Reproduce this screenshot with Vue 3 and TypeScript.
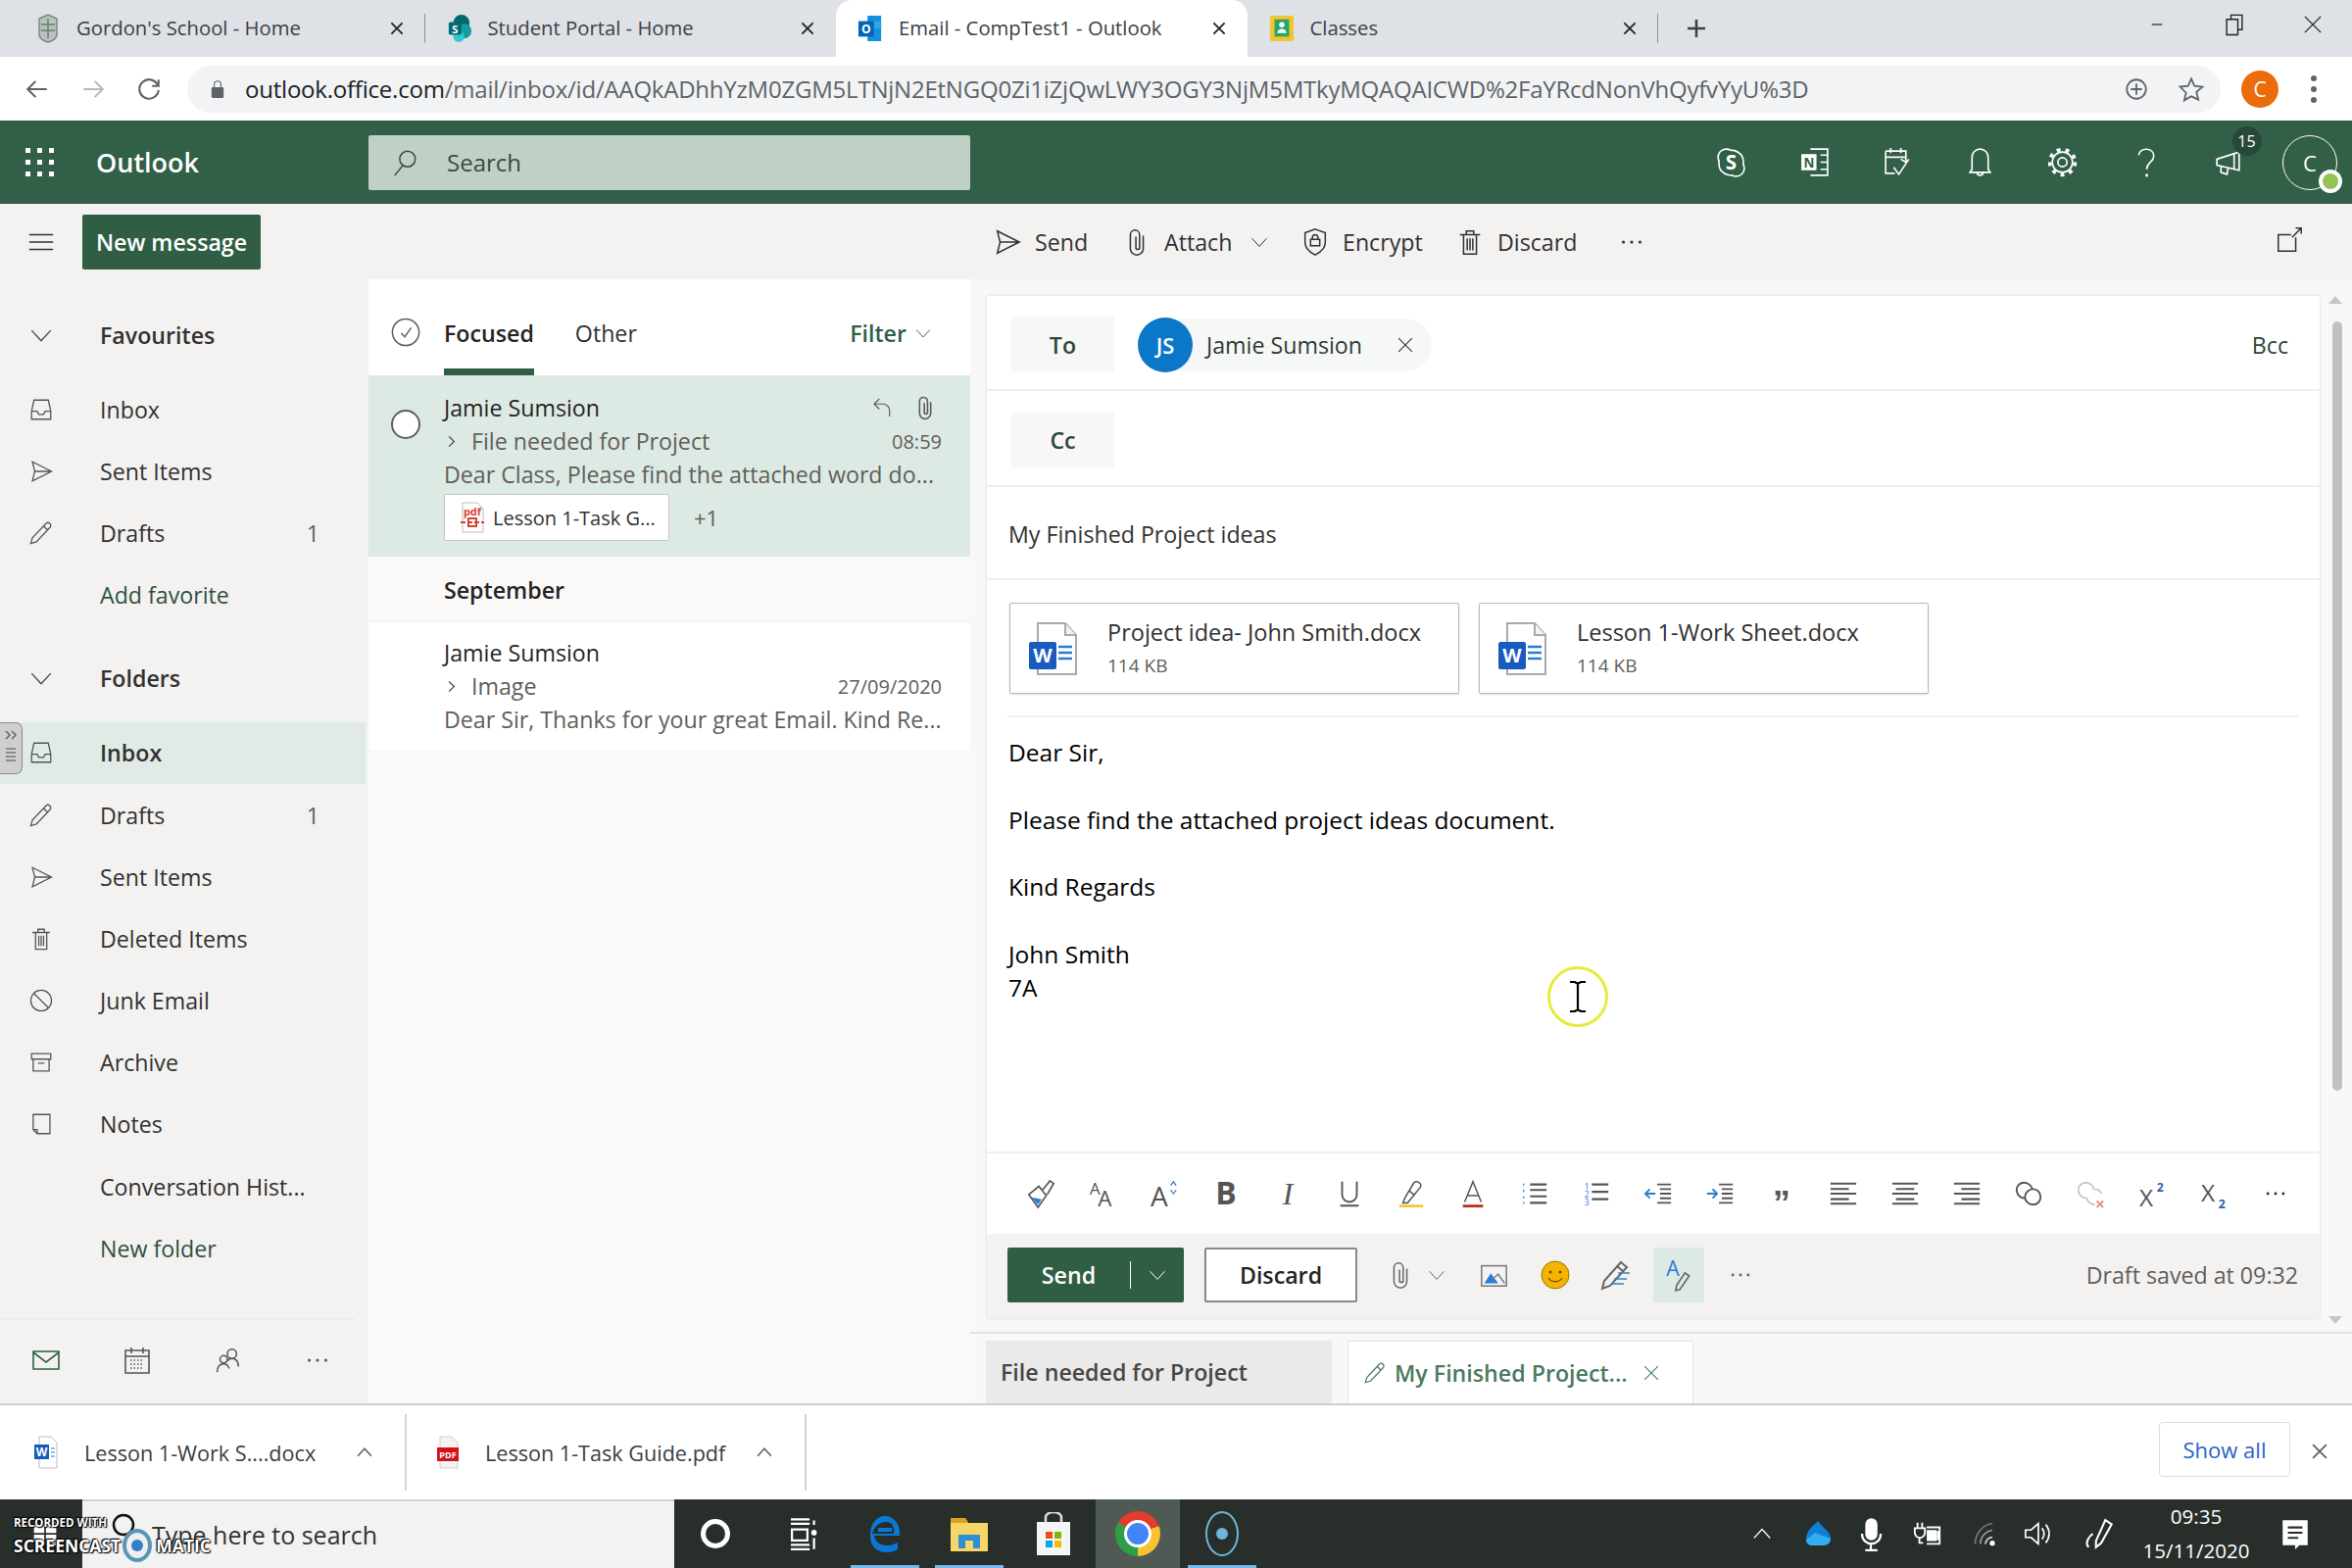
<script setup lang="ts">
import { h } from 'vue'

const dots3 = '<circle cx="7" cy="16" r="1.7" fill="currentColor" stroke="none"/><circle cx="16" cy="16" r="1.7" fill="currentColor" stroke="none"/><circle cx="25" cy="16" r="1.7" fill="currentColor" stroke="none"/>'
const p = (d: string, extra = '') => `<path d="${d}" ${extra}/>`
const icons: Record<string, string> = {
  inbox: p('M7 4h18l3 14v10H4V18z M4 18h7l2 4h6l2-4h7'),
  send: p('M5 4l24 12L5 28l3-12z M8 16h21'),
  pencil: p('M22 4a3.5 3.5 0 0 1 5 5L10 27l-7 2 2-7z M19 7l5 5'),
  trash: p('M9 8v21h14V8 M5 8h22 M12 8V4h8v4 M13 12v13M16 12v13M19 12v13'),
  junk: '<circle cx="16" cy="16" r="13"/>' + p('M7 7l18 18'),
  archive: p('M4 5h24v7H4z M6 12v15h20V12 M12 17h8'),
  note: p('M6 4h21v24H11l-5-5z M6 23h5v5'),
  chevd: p('M4 10l12 13 12-13'),
  chevu: p('M5 22L16 10l11 12'),
  chevr: p('M11 5l11 11-11 11'),
  clip: p('M23 9v14a7 7 0 0 1-14 0V8a5 5 0 0 1 10 0v14a2 2 0 0 1-4 0V10'),
  shield: p('M16 2l11 4v10c0 7-5 11-11 14C10 27 5 23 5 16V6z M11 13h10v7H11z M13 13v-2a3 3 0 0 1 6 0v2'),
  popout: p('M23 13v15H4V10h14 M19 13l10-10 M23 3h6v6'),
  hamb: p('M3 8h26M3 16h26M3 24h26'),
  reply: p('M11 4L4 11l7 7 M4 11h12a9 9 0 0 1 9 9v8'),
  check: '<circle cx="16" cy="16" r="14.5"/>' + p('M11 17l4 4 7-10'),
  x: p('M6 6l20 20M26 6L6 26'),
  search: '<circle cx="19" cy="12" r="8.5"/>' + p('M14 19L5 30'),
  mail: p('M3 7h26v18H3z M3 8l13 10L29 8'),
  cal: p('M4 6h24v23H4z M4 12h24 M10 3v6M22 3v6') + '<path d="M9 16h14M9 20h14M9 24h14" stroke-dasharray="1.5 2"/>',
  people: '<circle cx="21" cy="9" r="5"/><circle cx="12" cy="15" r="4"/>' + p('M5 29c0-6 3-9 7-9s5 2 6 5 M16 17c1-2 3-3 5-3 5 0 7 4 7 9'),
  dots: dots3,
  back: p('M28 16H5 M14 6L4 16l10 10'),
  fwd: p('M4 16h23 M18 6l10 10-10 10'),
  reload: p('M27 11A12 12 0 1 0 28 17 M28 4v8h-8'),
  star: p('M16 3l4 9 10 1-7.500 6.500 2.300 9.500L16 25l-8.800 5 2.300-9.500L2 13l10-1z'),
  plusc: '<circle cx="16" cy="16" r="12"/>' + p('M16 9v14M9 16h14'),
  skype: '<path d="M11 3a8 8 0 0 0-8 8c0 2 .5 3 1 4-.5 5 1 9 4 11 3 2.500 6 3 9 3 2 1 3 1 4 1a8 8 0 0 0 8-8c0-1.500-.5-3-1-4 .5-5-1-9-4-11-3-2.500-6-3-9-3-1-1-3-1-4-1z"/><text x="16" y="23" text-anchor="middle" font-size="20" font-weight="700" fill="currentColor" stroke="none" font-family="Open Sans">S</text>',
  onenote: p('M12 3h17v26H12') + '<rect x="3" y="8" width="15" height="16" fill="currentColor" stroke="none"/><text x="10.500" y="21" text-anchor="middle" font-size="13" font-weight="700" fill="#325f47" stroke="none" font-family="Open Sans">N</text>' + p('M22 9h7M22 16h7M22 23h7'),
  todo: p('M5 5h20v11 M5 5v22h9 M5 11h20 M10 2v5M20 2v5 M13 21l5 7 10-15 M20 13l5 3'),
  bell: p('M16 3a8 8 0 0 0-8 8v12l-2 3h20l-2-3V11a8 8 0 0 0-8-8z M13 26a3 3 0 0 0 6 0'),
  gear: '<circle cx="16" cy="16" r="4.500"/><circle cx="16" cy="16" r="10"/><circle cx="16" cy="16" r="12.500" stroke-width="3.500" stroke-dasharray="3.800 5"/>',
  help: p('M9 9c1-8 15-8 15 1 0 6-7 6-7 13') + '<circle cx="17" cy="29" r="1.500" fill="currentColor" stroke="none"/>',
  mega: p('M5 13l22-7v18L5 19z M5 13v6 M9 20v6l6 2 1-6 M22 7v16'),
  minimize: p('M9 16h14'),
  restore: p('M12 9V5h13v17h-5 M7 10h13v18H7z'),
  plus: p('M16 4v24M4 16h24'),
  lock: '<rect x="7" y="13" width="18" height="16" rx="2" fill="currentColor" stroke="none"/>' + p('M11 13V9a5 5 0 0 1 10 0v4'),
  brush: '<path d="M3 17l11-9 8 10-9 13z" fill="#fff" stroke="#555" stroke-width="1.800"/><path d="M6 20l11 2-4 6z" fill="#2b7cd3" stroke="none"/><path d="M18 12l8-10 4 3-7 12" fill="#fff" stroke="#555" stroke-width="1.800"/>',
  aa: '<text x="2" y="17" font-size="18" fill="currentColor" stroke="none" font-family="Open Sans">A</text><text x="11" y="30" font-size="24" fill="currentColor" stroke="none" font-family="Open Sans">A</text>',
  asize: '<text x="1" y="30" font-size="30" fill="currentColor" stroke="none" font-family="Open Sans">A</text><path d="M23 7l3-4 3 4M23 12l3 4 3-4" stroke="#2b7cd3" stroke-width="1.300"/>',
  bold: '<text x="16" y="28" text-anchor="middle" font-size="34" font-weight="700" fill="currentColor" stroke="none" font-family="Open Sans">B</text>',
  italic: '<text x="16" y="28" text-anchor="middle" font-size="34" font-style="italic" fill="currentColor" stroke="none" font-family="Liberation Serif">I</text>',
  under: p('M8 3v14a8 8 0 0 0 16 0V3 M6 29h20', 'stroke-width="2"'),
  hi: p('M9 21l-2 5h5l14-17c2-4-4-8-7-5z M14 13l6 5') + '<rect x="3" y="28" width="26" height="3" fill="#f3c83b" stroke="none"/>',
  color: p('M7 25L16 3l9 22 M10 18h12') + '<rect x="5" y="28" width="22" height="3" fill="#b92f22" stroke="none"/>',
  bul: p('M11 6h18M11 12h18M11 19h18M11 26h18', 'stroke-width="2.200"') + '<path d="M4 5v2M4 12v2M4 19v2M4 25v2" stroke="#2b7cd3" stroke-width="1.500"/>',
  num: p('M11 6h18M11 14h18M11 22h18', 'stroke-width="2.200"') + '<text x="3" y="12" font-size="9" fill="#2b7cd3" stroke="none">1</text><text x="3" y="20" font-size="9" fill="#2b7cd3" stroke="none">2</text><text x="3" y="29" font-size="9" fill="#2b7cd3" stroke="none">3</text>',
  out: p('M15 6h15M18 11h12M18 16h12M18 21h12M15 26h15', 'stroke-width="2"') + '<path d="M2 16h11M7 11l-5 5 5 5" stroke="#2b7cd3" stroke-width="2"/>',
  ind: p('M15 6h15M18 11h12M18 16h12M18 21h12M15 26h15', 'stroke-width="2"') + '<path d="M2 16h11M8 11l5 5-5 5" stroke="#2b7cd3" stroke-width="2"/>',
  quote: '<text x="16" y="38" text-anchor="middle" font-size="38" font-weight="700" fill="currentColor" stroke="none" font-family="Liberation Sans">”</text>',
  al: p('M2 5h28M2 11h20M2 16h28M2 22h20M2 27h28', 'stroke-width="2.200"'),
  ac: p('M2 5h28M6 11h20M2 16h28M6 22h20M2 27h28', 'stroke-width="2.200"'),
  ar: p('M2 5h28M10 11h20M2 16h28M10 22h20M2 27h28', 'stroke-width="2.200"'),
  link: p('M3 12c0-5 4-8 8-8 5 0 9 4 9 8 M12 21c-5 0-9-4-9-9 M29 20c0 5-4 8-8 8-5 0-9-4-9-8 0-5 4-9 9-9 5 0 8 4 8 9', 'stroke-width="2"'),
  unlink: p('M3 12c0-5 4-8 8-8 5 0 9 4 9 8 M12 21c-5 0-9-4-9-9 M12 20c0 4 4 8 9 8 M21 11c3 0 6 2 7 5', 'stroke="#c8c8c8" stroke-width="2"') + '<path d="M23 24l7 7M30 24l-7 7" stroke="#e68a80" stroke-width="2"/>',
  sup: '<text x="2" y="30" font-size="26" fill="currentColor" stroke="none" font-family="Open Sans">X</text><text x="21" y="14" font-size="13" font-weight="700" fill="#2a5db0" stroke="none" font-family="Open Sans">2</text>',
  sub: '<text x="2" y="25" font-size="26" fill="currentColor" stroke="none" font-family="Open Sans">X</text><text x="21" y="32" font-size="13" font-weight="700" fill="#2a5db0" stroke="none" font-family="Open Sans">2</text>',
  image: '<rect x="3" y="6" width="27" height="22" fill="#f3f3f3" stroke="#777"/><path d="M6 25l7-11 8 11z" fill="#2b7cd3" stroke="none"/><path d="M17 19l4-4 7 10" stroke="#777"/>',
  smile: '<circle cx="16" cy="16" r="14" fill="#f5b400" stroke="#9a7400" stroke-width="1"/><circle cx="11" cy="13" r="1.500" fill="#6b4e00" stroke="none"/><circle cx="21" cy="13" r="1.500" fill="#6b4e00" stroke="none"/><path d="M9 19c3 5 11 5 14 0" stroke="#6b4e00" stroke-width="1.400"/>',
  sign: p('M22 3l6 5L11 27l-8 3 2-8z M18 7l6 5', 'stroke-width="2"') + '<path d="M19 14h12M15 20h13M12 25h13" stroke="#2e86b8" stroke-width="1.500"/>',
  apen: '<text x="4" y="17" font-size="20" fill="#2b7cd3" stroke="none" font-family="Open Sans">A</text>' + p('M22 14l4 3-9 13-4 1 1-5z', 'stroke="#666" stroke-width="1.600"'),
  win: '<path d="M3 6l12-2v11H3zM17 4l12-2v13H17zM3 17h12v11L3 26zM17 17h12v13l-12-2z" fill="currentColor" stroke="none"/>',
  task: p('M8 3h17M8 7h17M9 12h14v10H9z M8 26h17M8 30h17 M29 4v4M29 20v10', 'stroke-width="2"') + '<circle cx="29" cy="15" r="2.500" fill="currentColor" stroke="none"/>',
  mic: '<rect x="11" y="2" width="11" height="20" rx="5.500" fill="currentColor" stroke="none"/>' + p('M8 16c0 12 17 12 17 0 M16 26v5M11 31h11', 'stroke-width="2"'),
  power: p('M5 4v6M10 4v6 M2 10h11v5a5.500 5.500 0 0 1-11 0z M7 20v6h4 M15 9h14v18H15 M27 13v10', 'stroke-width="2"') + '<rect x="15" y="12" width="11" height="12" fill="currentColor" stroke="none"/>',
  wifi: '<path d="M4 28C4 16 12 6 24 4" stroke="#777" stroke-width="2"/><path d="M10 28c0-8 6-15 14-16" stroke="#999" stroke-width="2"/><path d="M16 28c0-4 4-8 8-8" stroke="#ccc" stroke-width="2"/><circle cx="24" cy="27" r="3" fill="#fff" stroke="none"/>',
  vol: p('M3 12h6l8-7v22l-8-7H3z M21 10c3 4 3 8 0 12 M25 6c5 6 5 14 0 20', 'stroke-width="1.800"'),
  pen: p('M21 3l6 4-10 18-5 4v-6z M9 16c-4 3-8 9-4 13', 'stroke-width="2"'),
  notif: '<path d="M4 3h24v24H20l-4 4v-4H4z" fill="currentColor" stroke="none"/><path d="M9 10h14M9 15h14M9 20h10" stroke="#282e2a" stroke-width="2"/>',
}

const Ic = (props: { n: string; s?: number | string; w?: number | string }) =>
  h('svg', {
    class: 'ic',
    width: props.w || props.s || 32,
    height: props.s || 32,
    viewBox: '0 0 32 32',
    fill: 'none',
    stroke: 'currentColor',
    'stroke-width': 1.6,
    innerHTML: icons[props.n],
    preserveAspectRatio: 'xMidYMid meet',
  })
Ic.props = ['n', 's', 'w']

const tabs = [
  { t: "Gordon's School - Home", f: 'crest', active: false },
  { t: 'Student Portal - Home', f: 'sp', active: false },
  { t: 'Email - CompTest1 - Outlook', f: 'ol', active: true },
  { t: 'Classes', f: 'cl', active: false },
]
const headIcons = ['skype', 'onenote', 'todo', 'bell', 'gear', 'help', 'mega']
const favs = [
  { i: 'inbox', l: 'Inbox' },
  { i: 'send', l: 'Sent Items' },
  { i: 'pencil', l: 'Drafts', c: '1' },
  { i: '', l: 'Add favorite', green: true },
]
const folders = [
  { i: 'inbox', l: 'Inbox', on: true },
  { i: 'pencil', l: 'Drafts', c: '1' },
  { i: 'send', l: 'Sent Items' },
  { i: 'trash', l: 'Deleted Items' },
  { i: 'junk', l: 'Junk Email' },
  { i: 'archive', l: 'Archive' },
  { i: 'note', l: 'Notes' },
  { i: '', l: 'Conversation Hist...' },
  { i: '', l: 'New folder', green: true },
]
const fmt = ['brush', 'aa', 'asize', 'bold', 'italic', 'under', 'hi', 'color', 'bul', 'num', 'out', 'ind', 'quote', 'al', 'ac', 'ar', 'link', 'unlink', 'sup', 'sub', 'dots']
const sendTools = [
  { i: 'clip', w: 40, s: 30 },
  { i: 'chevd', w: 34, s: 20 },
  { i: 'image', w: 82, s: 30 },
  { i: 'smile', w: 44, s: 32 },
  { i: 'sign', w: 78, s: 32 },
  { i: 'apen', w: 52, s: 34, on: true },
  { i: 'dots', w: 74, s: 28 },
]
const attachments = [
  { n: 'Project idea- John Smith.docx', s: '114 KB' },
  { n: 'Lesson 1-Work Sheet.docx', s: '114 KB' },
]
const bodyLines = ['Dear Sir,', '', 'Please find the attached project ideas document.', '', 'Kind Regards', '', 'John Smith', '7A']
const tray = [
  { i: 'chevu', w: 56, s: 24 },
  { i: 'od', w: 58, s: 30 },
  { i: 'mic', w: 50, s: 36 },
  { i: 'power', w: 66, s: 30 },
  { i: 'wifi', w: 52, s: 28 },
  { i: 'vol', w: 54, s: 30 },
  { i: 'pen', w: 74, s: 34 },
]
const taskApps = ['edge', 'files', 'store', 'chrome', 'sc']
</script>

<template>
  <div class="app">
    <!-- browser tab strip -->
    <div class="tabstrip">
      <div v-for="t in tabs" :key="t.t" class="tab" :class="{ active: t.active }">
        <svg v-if="t.f === 'crest'" class="fav" viewBox="0 0 24 32" width="24" height="32">
          <path d="M3 6l9-4 9 4v16c0 5-5 7-9 8-4-1-9-3-9-8z" fill="#b6c2bc" stroke="#7c8a84" stroke-width="1.500" />
          <path d="M5 12h14M5 18h14M12 6v20" stroke="#6e7e76" stroke-width="1.500" />
        </svg>
        <svg v-else-if="t.f === 'sp'" class="fav" viewBox="0 0 28 32" width="28" height="32">
          <circle cx="16" cy="10" r="9" fill="#04686f" />
          <circle cx="19" cy="19" r="8" fill="#1a9ba1" />
          <circle cx="13" cy="25" r="6" fill="#37c6d0" />
          <rect x="2" y="9" width="14" height="14" rx="2" fill="#036c70" />
          <text x="9" y="21" text-anchor="middle" font-size="12" font-weight="700" fill="#fff" font-family="Open Sans">S</text>
        </svg>
        <svg v-else-if="t.f === 'ol'" class="fav" viewBox="0 0 28 32" width="28" height="32">
          <rect x="11" y="2" width="15" height="28" fill="#1490df" />
          <rect x="16" y="8" width="10" height="8" fill="#28a8ea" />
          <rect x="1" y="8" width="17" height="17" fill="#0364b8" />
          <text x="9.500" y="21" text-anchor="middle" font-size="13" font-weight="700" fill="#fff" font-family="Open Sans">O</text>
        </svg>
        <svg v-else class="fav" viewBox="0 0 28 30" width="28" height="30">
          <rect x="1" y="1" width="26" height="28" rx="2" fill="#f4c430" />
          <rect x="6" y="5" width="16" height="19" fill="#25a667" />
          <circle cx="14" cy="11" r="3" fill="#fff" />
          <path d="M9 20c0-6 10-6 10 0z" fill="#fff" />
        </svg>
        <span class="tabtitle">{{ t.t }}</span>
        <Ic n="x" s="18" class="tabx" />
      </div>
      <Ic n="plus" s="24" class="newtab" />
      <div class="winctl">
        <Ic n="minimize" s="24" />
        <Ic n="restore" s="28" />
        <Ic n="x" s="26" />
      </div>
    </div>

    <!-- browser toolbar -->
    <div class="toolbar">
      <Ic n="back" s="26" class="navb" />
      <Ic n="fwd" s="26" class="navb dim" />
      <Ic n="reload" s="26" class="navb" />
      <div class="omni">
        <Ic n="lock" s="22" class="lock" />
        <span class="url"><b>outlook.office.com</b>/mail/inbox/id/AAQkADhhYzM0ZGM5LTNjN2EtNGQ0Zi1iZjQwLWY3OGY3NjM5MTkyMQAQAICWD%2FaYRcdNonVhQyfvYyU%3D</span>
        <Ic n="plusc" s="26" class="om1" />
        <Ic n="star" s="26" class="om2" />
      </div>
      <div class="profile">C</div>
      <div class="kebab"><i></i><i></i><i></i></div>
    </div>

    <!-- outlook header -->
    <div class="ohead">
      <div class="waffle"><i v-for="n in 9" :key="n"></i></div>
      <div class="brand">Outlook</div>
      <div class="osearch"><Ic n="search" s="30" /><span>Search</span></div>
      <div class="oicons">
        <div v-for="i in headIcons" :key="i" class="oicon">
          <Ic :n="i" s="33" />
          <span v-if="i === 'mega'" class="badge">15</span>
        </div>
        <div class="me">C<span class="pres"></span></div>
      </div>
    </div>

    <!-- command bar -->
    <div class="cmd">
      <Ic n="hamb" s="30" class="hamb" />
      <div class="newmsg">New message</div>
      <div class="act a1"><Ic n="send" s="30" /><span>Send</span></div>
      <div class="act a2"><Ic n="clip" s="30" /><span>Attach</span><Ic n="chevd" s="20" class="achev" /></div>
      <div class="act a3"><Ic n="shield" s="30" /><span>Encrypt</span></div>
      <div class="act a4"><Ic n="trash" s="30" /><span>Discard</span></div>
      <Ic n="dots" s="30" class="adots" />
      <Ic n="popout" s="30" class="apop" />
    </div>

    <div class="main">
      <!-- folder pane -->
      <aside class="left">
        <div class="sect">
          <div class="head"><Ic n="chevd" s="26" class="chev" /><b>Favourites</b></div>
          <div v-for="f in favs" :key="f.l" class="row" :class="{ green: f.green }">
            <span class="ricon"><Ic v-if="f.i" :n="f.i" s="26" /></span>
            <span class="rlabel">{{ f.l }}</span>
            <span v-if="f.c" class="cnt">{{ f.c }}</span>
          </div>
        </div>
        <div class="sect s2">
          <div class="head"><Ic n="chevd" s="26" class="chev" /><b>Folders</b></div>
          <div v-for="f in folders" :key="f.l" class="row" :class="{ green: f.green, on: f.on }">
            <span class="ricon"><Ic v-if="f.i" :n="f.i" s="26" /></span>
            <span class="rlabel">{{ f.l }}</span>
            <span v-if="f.c" class="cnt">{{ f.c }}</span>
          </div>
        </div>
        <div class="bnav">
          <Ic n="mail" s="32" class="mailic" />
          <Ic n="cal" s="32" />
          <Ic n="people" s="30" />
          <Ic n="dots" s="30" class="bdots" />
        </div>
        <div class="handle">
          <svg width="14" height="12" viewBox="0 0 14 12"><path d="M2 2l4 4-4 4M8 2l4 4-4 4" fill="none" stroke="#666" stroke-width="1.500" /></svg>
          <em></em>
        </div>
      </aside>

      <!-- message list -->
      <section class="list">
        <div class="lhead">
          <Ic n="check" s="30" class="lchk" />
          <div class="ltab on">Focused</div>
          <div class="ltab">Other</div>
          <div class="filter">Filter<Ic n="chevd" s="18" /></div>
        </div>
        <div class="item sel">
          <span class="circ"></span>
          <div class="l1"><span>Jamie Sumsion</span><Ic n="reply" s="24" class="rep" /><Ic n="clip" s="26" class="cl" /></div>
          <div class="l2"><Ic n="chevr" s="15" class="ch" /><span class="subj">File needed for Project</span><span class="time">08:59</span></div>
          <div class="l3">Dear Class, Please find the attached word do...</div>
          <div class="l4">
            <div class="chip">
              <svg width="26" height="32" viewBox="0 0 26 32" class="pdf"><path d="M3 1h15l6 6v24H3z" fill="#fff" stroke="#bbb" /><text x="13" y="14" text-anchor="middle" font-size="11" font-weight="700" fill="#d9442f" font-family="Open Sans">pdf</text><path d="M1 21h24" stroke="#d9442f" stroke-width="2" stroke-dasharray="5 2" /><rect x="9" y="17" width="8" height="8" fill="none" stroke="#d9442f" stroke-width="2" /></svg>
              <span>Lesson 1-Task G...</span>
            </div>
            <span class="plus1">+1</span>
          </div>
        </div>
        <div class="month">September</div>
        <div class="item plain">
          <div class="l1"><span>Jamie Sumsion</span></div>
          <div class="l2"><Ic n="chevr" s="15" class="ch" /><span class="subj">Image</span><span class="time">27/09/2020</span></div>
          <div class="l3">Dear Sir, Thanks for your great Email. Kind Re...</div>
        </div>
      </section>

      <!-- reading pane -->
      <section class="read">
        <div class="cwrap">
          <div class="card">
            <div class="frow to">
              <div class="fbtn">To</div>
              <div class="pchip"><span class="av">JS</span><span class="pname">Jamie Sumsion</span><Ic n="x" s="22" class="px" /></div>
              <span class="bcc">Bcc</span>
            </div>
            <div class="frow cc"><div class="fbtn">Cc</div></div>
            <div class="frow sj">My Finished Project ideas</div>
            <div class="atts">
              <div v-for="a in attachments" :key="a.n" class="att">
                <svg width="50" height="56" viewBox="0 0 50 56" class="doc">
                  <path d="M9 2h28l11 12v40H9z" fill="#fff" stroke="#a9a9a9" stroke-width="2" />
                  <path d="M37 2v12h11" fill="#f2f2f2" stroke="#a9a9a9" stroke-width="2" />
                  <path d="M30 26h14M30 32h14M30 38h14" stroke="#2b7cd3" stroke-width="2.500" />
                  <rect x="0" y="21" width="28" height="28" rx="2" fill="#185abd" />
                  <text x="14" y="42" text-anchor="middle" font-size="20" font-weight="700" fill="#fff" font-family="Open Sans">W</text>
                </svg>
                <div class="attxt"><div class="an">{{ a.n }}</div><div class="as">{{ a.s }}</div></div>
              </div>
            </div>
            <div class="body">
              <div v-for="(l, i) in bodyLines" :key="i" class="bl">{{ l || '\u00a0' }}</div>
              <div class="ring"><svg width="18" height="32" viewBox="0 0 18 32"><path d="M1 1h5l3 2 3-2h5M1 31h5l3-2 3 2h5M9 3v26" fill="none" stroke="#000" stroke-width="2.200" /></svg></div>
            </div>
            <div class="fmt">
              <div v-for="f in fmt" :key="f" class="fb" :class="f"><Ic :n="f" :s="f === 'dots' ? 28 : 30" /></div>
            </div>
            <div class="sendbar">
              <div class="sendbtn"><span class="st">Send</span><i></i><Ic n="chevd" s="20" /></div>
              <div class="discard">Discard</div>
              <div v-for="t in sendTools" :key="t.i" class="sb" :class="{ on: t.on }" :style="{ width: t.w + 'px' }"><Ic :n="t.i" :s="t.s" /></div>
              <span class="saved">Draft saved at 09:32</span>
            </div>
          </div>
          <div class="sbar"><span class="up"></span><span class="thumb"></span><span class="dn"></span></div>
        </div>
        <div class="rtabs">
          <div class="rt off">File needed for Project</div>
          <div class="rt cur"><Ic n="pencil" s="24" /><span>My Finished Project...</span><Ic n="x" s="22" class="rx" /></div>
        </div>
      </section>
    </div>

    <!-- downloads shelf -->
    <div class="shelf">
      <div class="dl">
        <svg width="24" height="34" viewBox="0 0 24 34"><path d="M5 1h12l6 6v26H5z" fill="#fff" stroke="#bdbdbd" /><rect x="0" y="9" width="15" height="15" fill="#185abd" /><text x="7.500" y="21" text-anchor="middle" font-size="12" font-weight="700" fill="#fff" font-family="Open Sans">W</text><path d="M17 13h4M17 17h4M17 21h4" stroke="#2b7cd3" /></svg>
        <span>Lesson 1-Work S....docx</span>
        <Ic n="chevu" s="20" />
      </div>
      <div class="dl d2">
        <svg width="24" height="34" viewBox="0 0 24 34"><path d="M4 1h12l6 6v26H4z" fill="#f4f4f4" stroke="#cfcfcf" /><rect x="1" y="12" width="22" height="14" fill="#d3131b" /><text x="12" y="23" text-anchor="middle" font-size="9" font-weight="700" fill="#fff" font-family="Open Sans">PDF</text></svg>
        <span>Lesson 1-Task Guide.pdf</span>
        <Ic n="chevu" s="20" />
      </div>
      <div class="showall">Show all</div>
      <Ic n="x" s="22" class="shx" />
    </div>

    <!-- windows taskbar -->
    <div class="taskbar">
      <div class="tstart"><Ic n="win" s="28" /></div>
      <div class="tsearch">
        <svg width="30" height="30" viewBox="0 0 30 30" class="tsi"><circle cx="14" cy="13" r="10" fill="none" stroke="#111" stroke-width="2.500" /></svg>
        <span>Type here to search</span>
      </div>
      <div class="cortana"><i></i></div>
      <div class="tview"><Ic n="task" s="36" /></div>
      <div v-for="a in taskApps" :key="a" class="tapp" :class="a">
        <svg v-if="a === 'edge'" width="38" height="44" viewBox="0 0 38 44">
          <path d="M8 24h26c1-12-6-20-15-20S4 12 4 24s8 17 16 17c5 0 9-1 12-3v-7c-3 2-7 3-11 3-7 0-12-4-13-10z" fill="#0a78d7" />
          <path d="M6 22c2-8 8-12 14-12s9 4 8 12z" fill="#282e2a" />
          <path d="M12 18h14" stroke="#0a78d7" stroke-width="4" />
        </svg>
        <svg v-else-if="a === 'files'" width="40" height="38" viewBox="0 0 40 38">
          <path d="M1 3h15l3 5h20v29H1z" fill="#f7d566" />
          <path d="M1 3h15l3 5H1z" fill="#d9a21c" />
          <rect x="9" y="20" width="22" height="14" fill="#2d8fdc" />
          <rect x="16" y="26" width="8" height="11" fill="#f7d566" />
        </svg>
        <svg v-else-if="a === 'store'" width="40" height="44" viewBox="0 0 40 44">
          <path d="M12 10V5a8 5 0 0 1 16 0v5" fill="none" stroke="#ddd" stroke-width="2.500" />
          <rect x="3" y="10" width="34" height="34" fill="#f5f5f5" />
          <rect x="12" y="20" width="7" height="7" fill="#e74c1c" /><rect x="21" y="20" width="7" height="7" fill="#7db900" />
          <rect x="12" y="29" width="7" height="7" fill="#00a4ef" /><rect x="21" y="29" width="7" height="7" fill="#fbb800" />
        </svg>
        <div v-else-if="a === 'chrome'" class="chromeic"><i></i></div>
        <div v-else class="scic"><i></i></div>
      </div>
      <div class="tray">
        <div v-for="t in tray" :key="t.i" class="ti" :style="{ width: t.w + 'px' }">
          <svg v-if="t.i === 'od'" width="30" height="30" viewBox="0 0 30 30"><path d="M15 2C9 8 3 12 3 21c0 4 3 6 7 6h10c5 0 8-3 8-7 0-7-7-10-13-18z" fill="#0d7fd6" /><path d="M3 21l9-7 16 6c0 4-3 7-8 7H10c-4 0-7-2-7-6z" fill="#30aef0" /></svg>
          <Ic v-else :n="t.i" :s="t.s" />
        </div>
        <div class="clock"><div>09:35</div><div>15/11/2020</div></div>
        <div class="nt"><Ic n="notif" s="34" /></div>
      </div>
      <div class="wm">
        <div class="w1">RECORDED WITH</div>
        <div class="w2"><span>SCREENCAST</span><span class="wo"><i></i></span><span>MATIC</span></div>
      </div>
    </div>
  </div>
</template>

<style scoped>
.app { width: 2400px; height: 1600px; overflow: hidden; display: flex; flex-direction: column; font-family: "Open Sans", "Noto Sans", sans-serif; font-size: 23.2px; color: #323130; background: #fff; position: relative; }

/* tab strip */
.tabstrip { height: 58px; flex: none; background: #dee1e6; display: flex; align-items: center; padding-left: 14px; color: #3c4043; font-size: 20.3px; }
.tab { width: 419.5px; height: 58px; display: flex; align-items: center; padding: 0 20px 0 22px; box-sizing: border-box; position: relative; flex: none; }
.tab::after { content: ""; position: absolute; right: 0; top: 14px; height: 30px; width: 1px; background: #8e9196; }
.tab:nth-child(2)::after, .tab:nth-child(3)::after { display: none; }
.tab.active { background: #fff; border-radius: 16px 16px 0 0; }
.fav { flex: none; width: 26px; margin-right: 16px; }
.tabtitle { white-space: nowrap; margin-top: -2px; }
.tabx { margin-left: auto; color: #222; flex: none; stroke-width: 3.2; }
.newtab { margin-left: 27px; color: #3c4043; flex: none; stroke-width: 3.4; }
.winctl { margin-left: auto; display: flex; align-items: center; gap: 53px; padding-right: 27px; color: #222; margin-top: -8px; stroke-width: 2.4; }

/* toolbar */
.toolbar { height: 65px; flex: none; background: #fff; display: flex; align-items: center; padding-left: 25px; box-sizing: border-box; }
.navb { flex: none; margin-right: 31px; color: #5f6368; stroke-width: 2.6; }
.navb.dim { color: #b6b9bd; }
.omni { position: relative; flex: none; width: 2075px; height: 48px; margin-left: -5px; border-radius: 24px; background: #f1f3f4; display: flex; align-items: center; padding-left: 20px; box-sizing: border-box; color: #5f6368; }
.lock { color: #5f6368; margin-right: 17px; flex: none; }
.url { font-size: 24px; letter-spacing: -0.22px; white-space: nowrap; }
.url b { font-weight: 400; color: #202124; }
.om1 { position: absolute; left: 1976px; color: #5f6368; stroke-width: 2.2; }
.om2 { position: absolute; left: 2032px; color: #5f6368; stroke-width: 2.2; }
.profile { flex: none; width: 38px; height: 38px; margin-left: 21px; border-radius: 50%; background: #ec6b0c; color: #fff; font-size: 21px; display: flex; align-items: center; justify-content: center; }
.kebab { flex: none; margin-left: 33px; display: flex; flex-direction: column; gap: 5px; }
.kebab i { width: 6px; height: 6px; border-radius: 50%; background: #5f6368; display: block; }

/* outlook header */
.ohead { height: 85px; flex: none; background: #325f47; color: #fff; display: flex; align-items: center; position: relative; }
.waffle { width: 30px; margin-left: 26px; display: grid; grid-template-columns: repeat(3, 5px); gap: 7px 7px; flex: none; }
.waffle i { width: 5px; height: 5px; background: #fff; display: block; }
.brand { font-size: 27px; font-weight: 600; margin-left: 42px; width: 278px; flex: none; }
.osearch { width: 614px; height: 56px; background: #c0d0c5; border-radius: 2px; display: flex; align-items: center; padding-left: 22px; box-sizing: border-box; color: #3c4a42; flex: none; }
.osearch span { margin-left: 28px; font-size: 24px; }
.oicons { margin-left: auto; display: flex; align-items: center; }
.oicon { width: 84.5px; display: flex; align-items: center; justify-content: center; position: relative; }
.badge { position: absolute; left: 46px; top: -20px; width: 30px; height: 30px; border-radius: 50%; background: #28483a; font-size: 16px; display: flex; align-items: center; justify-content: center; }
.me { width: 56px; height: 56px; border: 1.5px solid #fff; border-radius: 50%; box-sizing: border-box; display: flex; align-items: center; justify-content: center; font-size: 22px; margin: 0 15px 0 13px; position: relative; }
.pres { position: absolute; right: -6px; bottom: -4px; width: 16px; height: 16px; border-radius: 50%; background: #92c353; border: 4px solid #fff; }

/* command bar */
.cmd { height: 77px; flex: none; background: #f3f2f1; display: flex; align-items: center; box-sizing: border-box; position: relative; color: #323130; }
.hamb { margin-left: 27px; width: 30px; flex: none; }
.newmsg { margin-left: 27px; width: 182px; height: 56px; background: #2f5e45; color: #fff; border-radius: 2px; font-size: 23.2px; font-weight: 600; display: flex; align-items: center; justify-content: center; flex: none; }
.act { display: flex; align-items: center; gap: 13px; flex: none; box-sizing: border-box; }
.a1 { margin-left: 747px; width: 132px; }
.a2 { width: 182px; }
.a3 { width: 158px; }
.a4 { width: 165px; }
.achev { margin-left: 5px; }
.adots { flex: none; margin-left: 0; }
.apop { margin-left: auto; margin-right: 49px; flex: none; margin-top: -3px; }

/* main */
.main { flex: 1; min-height: 0; display: flex; }
.left { width: 376px; flex: none; background: #f3f2f1; display: flex; flex-direction: column; position: relative; padding-top: 25px; box-sizing: border-box; }
.head { height: 63px; display: flex; align-items: center; margin-bottom: 13px; padding-left: 29px; }
.head b { font-weight: 600; margin-left: 47px; }
.s2 { margin-top: 22px; }
.chev { flex: none; color: #444; }
.row { height: 63.2px; display: flex; align-items: center; padding-left: 29px; margin-right: 3px; box-sizing: border-box; }
.row.on { background: #e1ebe5; }
.row.on .rlabel { font-weight: 600; }
.row.green { color: #2f5040; }
.ricon { width: 26px; height: 26px; flex: none; margin-right: 47px; color: #555; display: block; }
.rlabel { white-space: nowrap; }
.cnt { margin-left: auto; margin-right: 47px; color: #605e5c; }
.bnav { margin-top: auto; height: 87px; flex: none; display: flex; align-items: center; color: #555; border-top: 2px solid #edebe9; margin-right: 14px; box-sizing: border-box; padding-left: 31px; padding-bottom: 3px; gap: 61px; }
.mailic { color: #2f5e45; }
.bdots { margin-left: 1px; }
.handle { position: absolute; left: 0; top: 452px; width: 23px; height: 53px; background: #cfcfcf; border: 1px solid #8b8b8b; border-left: 0; border-radius: 0 7px 7px 0; box-sizing: border-box; display: flex; flex-direction: column; align-items: center; padding-top: 6px; }
.handle em { display: block; width: 10px; height: 16px; margin-top: 5px; background: repeating-linear-gradient(0deg, #8c8c8c 0 2px, transparent 2px 4px); }

/* list */
.list { width: 614px; flex: none; background: #faf9f8; display: flex; flex-direction: column; }
.lhead { height: 98px; flex: none; background: #fff; display: flex; align-items: center; position: relative; }
.lchk { margin-left: 23px; color: #605e5c; flex: none; margin-top: 10px; margin-right: 24px; }
.ltab { height: 98px; display: flex; align-items: center; padding-top: 12px; box-sizing: border-box; margin-right: 42px; position: relative; }
.ltab.on { font-weight: 600; color: #252423; }
.ltab.on::after { content: ""; position: absolute; left: 0; right: 0; bottom: 0; height: 7px; background: #2f5e45; }
.filter { margin-left: auto; margin-right: 39px; color: #2f5e45; font-weight: 600; display: flex; align-items: center; gap: 8px; margin-top: 12px; }
.item { padding-left: 77px; padding-right: 29px; position: relative; box-sizing: border-box; }
.sel { background: #dde9e3; height: 185px; flex: none; padding-top: 16px; }
.plain { background: #fff; height: 130px; flex: none; padding-top: 14px; }
.circ { position: absolute; left: 23px; top: 35px; width: 30px; height: 30px; border-radius: 50%; background: #fff; border: 2px solid #605e5c; box-sizing: border-box; }
.l1 { height: 34px; display: flex; align-items: center; color: #252423; }
.rep { margin-left: auto; color: #605e5c; margin-right: 18px; flex: none; }
.cl { color: #605e5c; margin-right: 4px; flex: none; stroke-width: 2; }
.l2 { height: 34px; display: flex; align-items: center; color: #605e5c; }
.ch { margin-right: 13px; flex: none; width: 15px; stroke-width: 2.6; color: #444; }
.subj { white-space: nowrap; }
.time { margin-left: auto; font-size: 20px; }
.l3 { height: 34px; display: flex; align-items: center; color: #605e5c; white-space: nowrap; }
.l4 { display: flex; align-items: center; margin-top: 3px; }
.chip { width: 230px; height: 48px; background: #fff; border: 1px solid #c8c6c4; border-radius: 2px; box-sizing: border-box; display: flex; align-items: center; padding-left: 15px; font-size: 20px; white-space: nowrap; color: #323130; }
.pdf { margin-right: 8px; flex: none; }
.plus1 { margin-left: 25px; color: #605e5c; font-size: 22px; }
.month { height: 67px; flex: none; display: flex; align-items: center; padding-left: 77px; padding-top: 2px; font-weight: 600; color: #252423; border-bottom: 2px solid #f3f2f1; box-sizing: border-box; }

/* reading */
.read { flex: 1; min-width: 0; background: #f8f8f7; display: flex; flex-direction: column; padding-left: 17px; box-sizing: border-box; }
.cwrap { height: 1076px; flex: none; display: flex; padding-top: 17px; border-bottom: 2px solid #e4e3e2; margin-left: -17px; padding-left: 17px; box-sizing: border-box; padding-bottom: 14px; }
.card { width: 1360px; flex: none; background: #fff; display: flex; flex-direction: column; box-shadow: 0 0 3px rgba(0,0,0,.14); }
.frow { flex: none; display: flex; align-items: center; padding-left: 25px; border-bottom: 2px solid #f0efee; box-sizing: border-box; position: relative; }
.to { height: 97px; padding-top: 4px; }
.cc { height: 98px; padding-top: 4px; }
.sj { height: 95px; padding-left: 22px; padding-top: 2px; color: #323130; }
.fbtn { width: 105px; height: 57px; background: #f6f7f6; display: flex; align-items: center; justify-content: center; font-weight: 600; color: #30463b; }
.pchip { display: flex; align-items: center; height: 54px; margin-left: 24px; border-radius: 28px; background: #f6f8f7; padding-right: 16px; }
.av { width: 56px; height: 56px; border-radius: 50%; background: #0b77c9; color: #fff; display: flex; align-items: center; justify-content: center; font-weight: 600; font-size: 22px; flex: none; }
.pname { margin-left: 14px; margin-right: 33px; color: #2d3b33; }
.px { color: #323130; }
.bcc { margin-left: auto; margin-right: 32px; color: #30463b; }
.atts { height: 140px; flex: none; display: flex; padding: 23px 0 0 23px; gap: 20px; box-sizing: border-box; position: relative; }
.atts::after { content: ""; position: absolute; left: 21px; right: 22px; bottom: 0; height: 2px; background: #f0efee; }
.att { width: 459px; height: 93px; background: #fff; border: 1px solid #b8b7b5; border-radius: 2px; box-shadow: 0 1px 2px rgba(0,0,0,.12); box-sizing: border-box; display: flex; align-items: center; padding-left: 19px; }
.doc { flex: none; margin-right: 30px; }
.attxt { margin-top: -3px; }
.an { font-size: 23.5px; color: #323130; line-height: 30px; }
.as { font-size: 19px; color: #605e5c; margin-top: 7px; line-height: 24px; }
.body { flex: 1; min-height: 0; padding: 19px 0 0 22px; position: relative; color: #000; font-size: 24.5px; }
.bl { height: 34.25px; line-height: 34.25px; white-space: nowrap; }
.ring { position: absolute; left: 572px; top: 254px; width: 62px; height: 62px; border: 3px solid #e6ec3c; border-radius: 50%; box-sizing: border-box; display: flex; align-items: center; justify-content: center; }
.fmt { height: 84px; flex: none; display: flex; align-items: center; padding-left: 23px; border-top: 2px solid #f0efee; box-sizing: border-box; color: #555; }
.fb { width: 63.05px; flex: none; display: flex; align-items: center; justify-content: center; }
.fb.unlink { color: #c8c8c8; }
.fb.dots { color: #333; }
.sendbar { height: 86px; flex: none; background: #f3f2f1; display: flex; align-items: center; padding-left: 21px; box-sizing: border-box; padding-bottom: 2px; }
.sendbtn { width: 180px; height: 56px; background: #2f5e45; border-radius: 2px; color: #fff; display: flex; align-items: center; font-weight: 600; flex: none; }
.st { width: 125px; text-align: center; }
.sendbtn i { width: 1px; height: 28px; background: #fff; display: block; margin-right: 17px; }
.discard { width: 156px; height: 56px; margin-left: 21px; border: 2px solid #8a8886; background: #fff; border-radius: 2px; box-sizing: border-box; display: flex; align-items: center; justify-content: center; font-weight: 600; color: #252423; flex: none; }
.sb { height: 56px; display: flex; align-items: center; justify-content: center; flex: none; color: #666; }
.sb:nth-child(3) { margin-left: 24px; }
.sb.on { background: #dde9e3; }
.saved { margin-left: auto; margin-right: 22px; color: #605e5c; white-space: nowrap; }
.sbar { width: 33px; flex: none; position: relative; }
.up { position: absolute; left: 9px; top: 0; border: 7px solid transparent; border-top: 0; border-bottom: 8px solid #c8c6c4; }
.dn { position: absolute; left: 9px; bottom: -6px; border: 7px solid transparent; border-bottom: 0; border-top: 8px solid #c8c6c4; }
.thumb { position: absolute; left: 13px; top: 26px; width: 10px; height: 785px; border-radius: 5px; background: #c2c1bf; }
.rtabs { flex: 1; display: flex; align-items: flex-end; margin-left: -1px; }
.rt { height: 64px; display: flex; align-items: center; box-sizing: border-box; width: 353px; flex: none; white-space: nowrap; font-size: 23.2px; }
.rt.off { background: #ebeaea; padding-left: 15px; color: #484644; font-weight: 600; margin-right: 16px; }
.rt.cur { background: #fff; padding-left: 15px; border: 1px solid #e4e3e2; border-bottom: 0; color: #4a7a60; font-weight: 600; }
.rt.cur span { margin-left: 8px; }
.rx { margin-left: 13px; color: #4a7a60; }

/* shelf */
.shelf { height: 98px; flex: none; background: #fff; border-top: 2px solid #cfcfcf; box-sizing: border-box; display: flex; align-items: center; position: relative; color: #3c4043; }
.dl { width: 415px; height: 78px; display: flex; align-items: center; padding-left: 35px; box-sizing: border-box; border-right: 2px solid #d3d3d3; flex: none; font-size: 21.6px; white-space: nowrap; }
.dl span { margin-left: 27px; }
.dl .ic { margin-left: auto; margin-right: 31px; color: #5f6368; stroke-width: 2.6; }
.d2 { padding-left: 30px; width: 408px; }
.d2 span { margin-left: 26px; }
.showall { margin-left: auto; margin-right: 63px; width: 134px; height: 56px; margin-top: -6px; border: 1px solid #dadce0; border-radius: 4px; box-sizing: border-box; color: #2a62c9; font-size: 22px; display: flex; align-items: center; justify-content: center; }
.shx { position: absolute; right: 22px; top: 36px; color: #5f6368; stroke-width: 2.6; }

/* taskbar */
.taskbar { height: 70px; flex: none; background: #282e2a; display: flex; align-items: center; position: relative; color: #fff; }
.tstart { width: 84px; flex: none; display: flex; justify-content: center; padding-left: 8px; box-sizing: border-box; }
.tsearch { width: 604px; height: 70px; flex: none; background: #f2f2f2; display: flex; align-items: center; color: #333; font-size: 25px; padding-left: 28px; box-sizing: border-box; border-top: 2px solid #d0d0d0; }
.tsi { flex: none; margin-top: -16px; }
.tsearch span { margin-left: 13px; white-space: nowrap; }
.cortana { width: 84px; display: flex; justify-content: center; flex: none; }
.cortana i { width: 20px; height: 20px; border: 5px solid #fff; border-radius: 50%; display: block; box-sizing: content-box; }
.tview { width: 88px; flex: none; display: flex; justify-content: center; }
.tapp { width: 86px; height: 70px; display: flex; align-items: center; justify-content: center; flex: none; position: relative; }
.tapp.edge::after, .tapp.files::after, .tapp.sc::after { content: ""; position: absolute; left: 8px; right: 8px; bottom: 0; height: 3px; background: #76b9ed; }
.tapp.chrome { background: #4f5a54; }
.chromeic { width: 46px; height: 46px; border-radius: 50%; background: conic-gradient(from -60deg, #e33b2e 0 130deg, #f7c32f 130deg 240deg, #2f9e48 240deg 360deg); display: flex; align-items: center; justify-content: center; }
.chromeic i { width: 22px; height: 22px; border-radius: 50%; background: #4285f4; border: 3px solid #fff; display: block; }
.scic { width: 34px; height: 46px; border: 2px solid #6cb5dc; border-radius: 50%; display: flex; align-items: center; justify-content: center; box-sizing: border-box; }
.scic i { width: 12px; height: 12px; border-radius: 50%; background: #6cb5dc; display: block; }
.tray { margin-left: auto; display: flex; align-items: center; height: 70px; }
.ti { display: flex; align-items: center; justify-content: center; flex: none; }
.clock { width: 122px; text-align: center; font-size: 20.5px; line-height: 35px; white-space: nowrap; }
.nt { width: 80px; display: flex; justify-content: center; margin-right: 18px; }
.wm { position: absolute; left: 14px; top: 15px; color: #fff; font-weight: 700; text-shadow: 0 0 2px #000, 0 0 2px #000, 1px 1px 1px #000, -1px -1px 1px #000; pointer-events: none; }
.w1 { font-size: 11.5px; line-height: 18px; }
.w2 { font-size: 17.5px; height: 26px; display: flex; align-items: center; margin-top: 1px; position: relative; white-space: nowrap; }
.wo { width: 30px; height: 34px; border: 4px solid #5b95b5; background: #eee; border-radius: 50%; box-sizing: border-box; display: flex; align-items: center; justify-content: center; margin: 0 4px 0 2px; flex: none; }
.wo i { width: 12px; height: 12px; border-radius: 50%; background: #2f80c8; display: block; }
</style>

<style>
.ic { display: block; overflow: visible; }
</style>
